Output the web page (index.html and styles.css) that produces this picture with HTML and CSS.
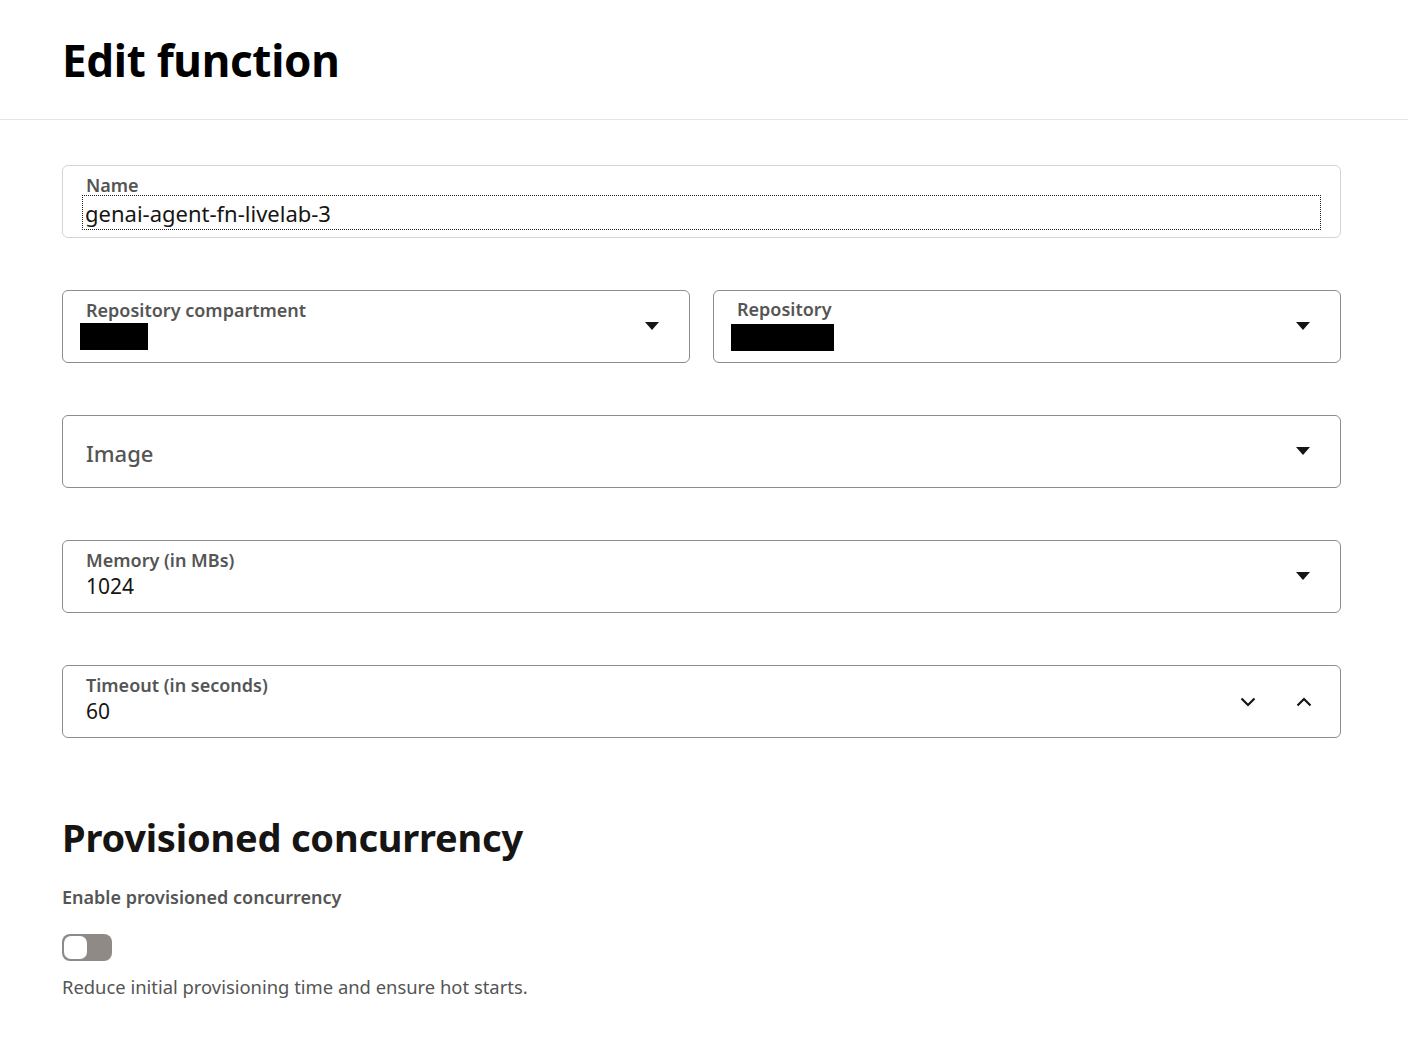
FILE: index.html
```html
<!DOCTYPE html>
<html lang="en">
<head>
<meta charset="utf-8">
<title>Edit function</title>
<link rel="stylesheet" href="styles.css">
</head>
<body>
<header class="page-header">
  <h1 class="page-title">Edit function</h1>
</header>
<main class="form">
  <div class="field field-readonly">
    <span class="field-label">Name</span>
    <span class="field-value field-focus">genai-agent-fn-livelab-3</span>
  </div>

  <div class="field-row">
    <div class="field field-select">
      <div class="field-body">
        <span class="field-label">Repository compartment</span>
        <span class="redacted redacted-a"></span>
      </div>
      <svg class="caret" viewBox="0 0 14 8" width="14" height="8"><path d="M0 0 H14 L7 8 Z" fill="#161513"/></svg>
    </div>
    <div class="field field-select">
      <div class="field-body">
        <span class="field-label">Repository</span>
        <span class="redacted redacted-b"></span>
      </div>
      <svg class="caret" viewBox="0 0 14 8" width="14" height="8"><path d="M0 0 H14 L7 8 Z" fill="#161513"/></svg>
    </div>
  </div>

  <div class="field field-select">
    <div class="field-body">
      <span class="field-placeholder">Image</span>
    </div>
    <svg class="caret" viewBox="0 0 14 8" width="14" height="8"><path d="M0 0 H14 L7 8 Z" fill="#161513"/></svg>
  </div>

  <div class="field field-select">
    <div class="field-body">
      <span class="field-label">Memory (in MBs)</span>
      <span class="field-value">1024</span>
    </div>
    <svg class="caret" viewBox="0 0 14 8" width="14" height="8"><path d="M0 0 H14 L7 8 Z" fill="#161513"/></svg>
  </div>

  <div class="field field-select">
    <div class="field-body">
      <span class="field-label">Timeout (in seconds)</span>
      <span class="field-value">60</span>
    </div>
    <div class="steppers">
      <svg class="chev" viewBox="0 0 16 10" width="16" height="10"><path d="M1.5 1.5 L8 8 L14.5 1.5" fill="none" stroke="#161513" stroke-width="2.2"/></svg>
      <svg class="chev" viewBox="0 0 16 10" width="16" height="10"><path d="M1.5 8.5 L8 2 L14.5 8.5" fill="none" stroke="#161513" stroke-width="2.2"/></svg>
    </div>
  </div>

  <section class="section">
    <h2 class="section-title">Provisioned concurrency</h2>
    <div class="switch-label">Enable provisioned concurrency</div>
    <div class="switch"><span class="switch-thumb"></span></div>
    <p class="help">Reduce initial provisioning time and ensure hot starts.</p>
  </section>
</main>
</body>
</html>
```
FILE: styles.css
```css
* { box-sizing: border-box; }
body {
  margin: 0;
  background: #fff;
  color: #161513;
  font-family: "Noto Sans", "Open Sans", sans-serif;
}
.page-header {
  height: 120px;
  border-bottom: 1px solid #e4e4e4;
  padding: 30px 62px 0;
}
.page-title {
  margin: 0;
  font-size: 44px;
  font-weight: 700;
  line-height: 60px;
  letter-spacing: -0.3px;
  color: #000;
}
.form {
  padding: 45px 67px 0 62px;
  display: flex;
  flex-direction: column;
  gap: 52px;
}
.field-row {
  display: flex;
  gap: 23px;
}
.field-row .field { flex: 1; }
.field {
  height: 73px;
  border: 1px solid #8c8c8c;
  border-radius: 6px;
  padding: 0 23px;
  display: flex;
  align-items: center;
}
.field-readonly {
  border-color: #d4d4d4;
  flex-direction: column;
  align-items: stretch;
  justify-content: center;
  padding: 0 20px 0 20px;
}
.field-readonly .field-label { padding-left: 3px; }
.field-body {
  flex: 1;
  display: flex;
  flex-direction: column;
  justify-content: center;
  height: 100%;
  padding-bottom: 4px;
}
.field-label {
  font-size: 18px;
  line-height: 22px;
  font-weight: 600;
  color: #555;
  display: block;
}
.field-value {
  font-size: 21px;
  line-height: 28px;
  margin-top: 1px;
  color: #161513;
  display: block;
}
.field-focus {
  outline: 1px dotted #222;
  padding-left: 2px;
  height: 33px;
  line-height: 34px;
  font-size: 22px;
  margin-top: 0;
}
.field-placeholder {
  font-size: 22px;
  color: #555;
  font-weight: 500;
  padding-top: 6px;
}
.redacted {
  display: block;
  background: #000;
  height: 27px;
  margin-top: 2px;
}
.redacted-a { width: 68px; margin-left: -6px; }
.redacted-b { width: 103px; margin-left: -6px; margin-top: 4px; }
.caret {
  flex: none;
  margin-right: 7px;
  margin-top: -1px;
}
.steppers {
  display: flex;
  gap: 40px;
  margin-right: 5px;
}
.chev { display: block; }
.section { margin-top: 22px; }
.section-title {
  margin: 0;
  font-size: 38px;
  line-height: 50px;
  font-weight: 700;
  color: #161513;
  letter-spacing: -0.2px;
}
.switch-label {
  margin-top: 22px;
  font-size: 18px;
  font-weight: 600;
  color: #555;
  line-height: 26px;
}
.switch {
  margin-top: 24px;
  width: 50px;
  height: 27px;
  border-radius: 8px;
  background: #8f8a85;
  padding: 2px;
}
.switch-thumb {
  display: block;
  width: 23px;
  height: 23px;
  border-radius: 7px;
  background: #fff;
}
.help {
  margin: 13px 0 0;
  font-size: 18.4px;
  line-height: 26px;
  color: #555;
}
```
